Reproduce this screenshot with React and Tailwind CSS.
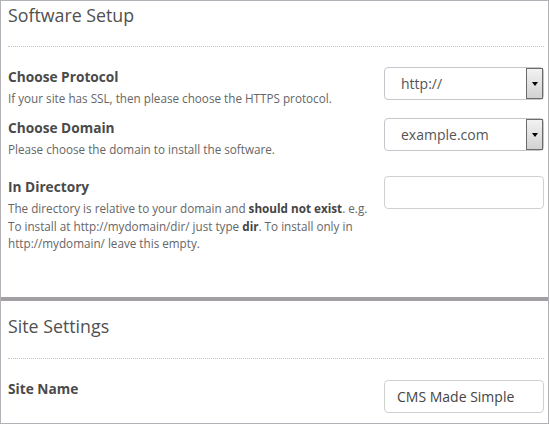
import React from "react";

const SelectBox = ({ value }) => {
  return (
    <div className="flex h-[33px] w-[160px] items-stretch rounded-[4px] border border-[#c8c4cc] bg-white">
      <div className="flex flex-1 items-center pl-[16px] text-[14px] text-[#555]">
        {value}
      </div>
      <div className="flex w-[17px] items-center justify-center border border-[#6b6b6b] bg-gradient-to-b from-[#f2f2f2] to-[#d2d2d2]">
        <div className="h-0 w-0 border-x-[3px] border-t-[4px] border-x-transparent border-t-black" />
      </div>
    </div>
  );
};

const TextBox = ({ value }) => {
  return (
    <div className="flex h-[33px] w-[160px] items-center rounded-[4px] border border-[#cfd2cc] bg-white pl-[12px] text-[14px] text-[#444]">
      {value}
    </div>
  );
};

const Label = ({ children, pt }) => (
  <div className={"text-[13.7px] font-bold leading-[18px] text-[#4a4a4a] " + pt}>
    {children}
  </div>
);

const Desc = ({ children }) => (
  <div className="mt-[4px] whitespace-nowrap text-[11.7px] leading-[17.5px] text-[#666]">
    {children}
  </div>
);

export default function App() {
  return (
    <div
      className="h-[424px] w-[549px] border border-[#b4b0b8] bg-white"
      style={{ fontFamily: '"Open Sans", "Noto Sans", sans-serif' }}
    >
      {/* Software Setup */}
      <div className="h-[296px] pl-[7px] pr-[4px]">
        <div className="h-[46px] border-b border-dotted border-[#c4c4c4] pt-[2px] text-[17.8px] leading-[24px] text-[#505050]">
          Software Setup
        </div>

        <div className="mt-[20px] flex h-[51px] items-start justify-between">
          <div className="w-[374px]">
            <Label pt="pt-[1px]">Choose Protocol</Label>
            <Desc>If your site has SSL, then please choose the HTTPS protocol.</Desc>
          </div>
          <SelectBox value="http://" />
        </div>

        <div className="flex h-[58px] items-start justify-between">
          <div className="w-[374px]">
            <Label pt="pt-[1px]">Choose Domain</Label>
            <Desc>Please choose the domain to install the software.</Desc>
          </div>
          <SelectBox value="example.com" />
        </div>

        <div className="flex items-start justify-between">
          <div className="w-[374px]">
            <Label pt="pt-[2px]">In Directory</Label>
            <Desc>
              The directory is relative to your domain and{" "}
              <b className="text-[#444]">should not exist</b>. e.g.
              <br />
              To install at http://mydomain/dir/ just type{" "}
              <b className="text-[#444]">dir</b>. To install only in
              <br />
              http://mydomain/ leave this empty.
            </Desc>
          </div>
          <TextBox value="" />
        </div>
      </div>

      <div className="h-[4px] bg-[#a2a0a4]" />

      {/* Site Settings */}
      <div className="pl-[7px] pr-[4px]">
        <div className="h-[58px] border-b border-dotted border-[#c4c4c4] pt-[13px] text-[17.8px] leading-[24px] text-[#505050]">
          Site Settings
        </div>
        <div className="mt-[21px] flex items-start justify-between">
          <div className="w-[374px]">
            <Label pt="pt-[0px]">Site Name</Label>
          </div>
          <TextBox value="CMS Made Simple" />
        </div>
      </div>
    </div>
  );
}
